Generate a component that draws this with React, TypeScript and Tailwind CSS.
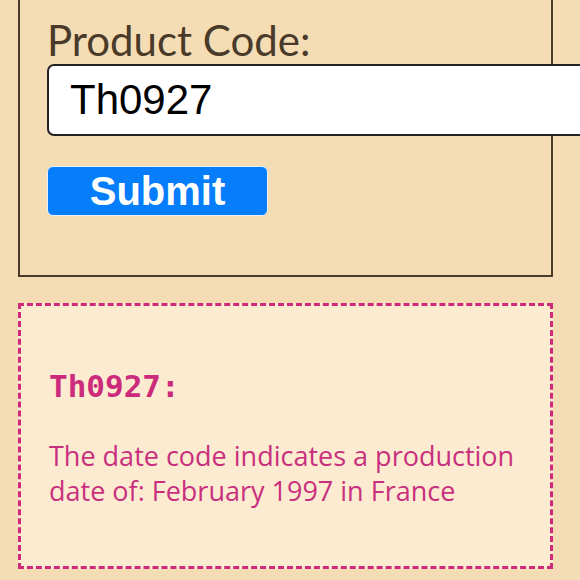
export default function App() {
  return (
    <div className="w-[580px] h-[580px] overflow-hidden bg-[#f4ddb4]">
      <div className="pl-[18px] w-[553px]">
        <form className="-mt-[20px] border-2 border-[#4b3b2b] pt-[35px] pb-[59px] pl-[27px]">
          <label className="block font-['Lato',sans-serif] text-[42px] leading-[46px] text-[#4a3a2a]">
            Product Code:
          </label>
          <input
            readOnly
            value="Th0927"
            className="mt-[1px] block w-[540px] h-[72px] bg-white border-2 border-[#222] rounded-[7px] pl-[21px] font-['Liberation_Sans',Arial,sans-serif] text-[42px] text-black outline-none"
          />
          <button
            type="button"
            className="mt-[30px] w-[221px] h-[50px] rounded-[6px] border border-[#e8f1fb] bg-[#067dfb] font-['Liberation_Sans',Arial,sans-serif] font-bold text-[40px] leading-none text-white"
          >
            Submit
          </button>
        </form>

        <div className="mt-[26px] h-[266px] border-[3px] border-dashed border-[#d0297c] bg-[#fdebd1] pl-[28px] pt-[60px]">
          <h2 className="font-['DejaVu_Sans_Mono',monospace] font-bold text-[31px] leading-[40px] text-[#cc2a7b]">
            Th0927:
          </h2>
          <p className="mt-[32px] font-['Open_Sans',sans-serif] text-[27px] leading-[35px] text-[#c8307e]">
            The date code indicates a production
            <br />
            date of: February 1997 in France
          </p>
        </div>
      </div>
    </div>
  );
}
